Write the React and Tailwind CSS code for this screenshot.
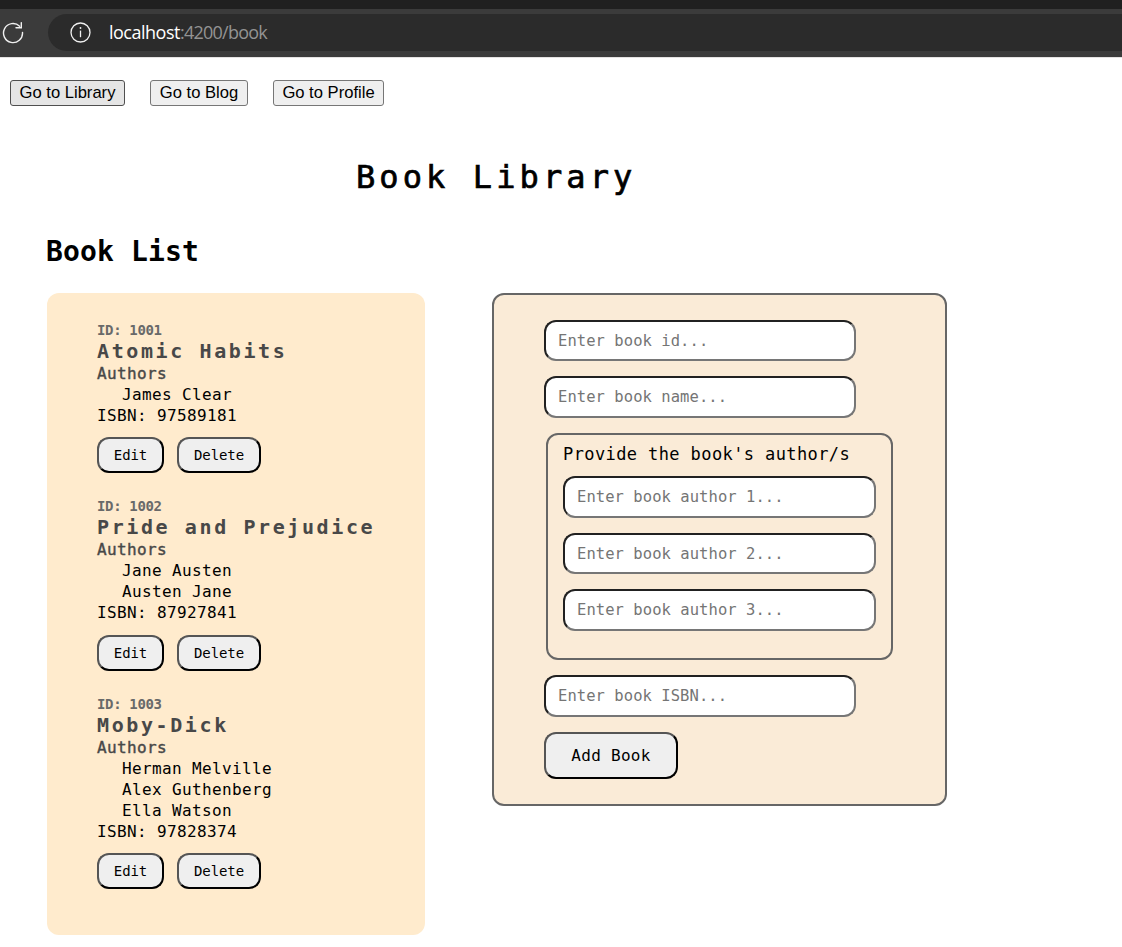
const books = [
  { id: 1001, title: "Atomic Habits", authors: ["James Clear"], isbn: "97589181", gap: "mt-[11px]" },
  { id: 1002, title: "Pride and Prejudice", authors: ["Jane Austen", "Austen Jane"], isbn: "87927841", gap: "mt-3" },
  { id: 1003, title: "Moby-Dick", authors: ["Herman Melville", "Alex Guthenberg", "Ella Watson"], isbn: "97828374", gap: "mt-[11px]" },
];

const outset =
  "rounded-xl border-2 border-t-[#555] border-l-[#555] border-r-black border-b-black bg-[#efefef] text-black whitespace-nowrap";

function BrowserBar() {
  return (
    <header className="h-[57px] bg-[#3b3b3b] border-t-[9px] border-[#202020] flex items-start pt-[5px]">
      <svg className="w-[24px] h-[24px] mt-[6px] shrink-0" viewBox="0 0 24 24" fill="none" stroke="#f0f0f0" strokeWidth="1.4">
        <path d="M19.6 6.2A9.5 9.5 0 1 0 22.5 12.4" strokeLinecap="round" />
        <path d="M21.3 2.6V7.7H16" strokeLinejoin="miter" strokeLinecap="round" />
      </svg>
      <div className="ml-[24px] flex-1 h-[37px] rounded-l-full bg-[#2b2b2b] flex items-center pl-[22px]">
        <svg className="w-[21px] h-[21px]" viewBox="0 0 21 21" fill="none" stroke="#f0f0f0" strokeWidth="1.3">
          <circle cx="10.5" cy="10.5" r="9.5" />
          <path d="M10.5 8.6v6.6" />
          <circle cx="10.5" cy="6" r="0.9" fill="#f0f0f0" stroke="none" />
        </svg>
        <p className="ml-[18px] -mt-0.5 font-['Open_Sans',sans-serif] text-[18px] leading-6 tracking-[-0.75px] text-[#939393]">
          <span className="text-white tracking-[-0.5px]">localhost</span>:4200/book
        </p>
      </div>
    </header>
  );
}

function NavButton({ children, className }) {
  return (
    <button className={"h-[26px] rounded-[3px] border font-['Liberation_Sans',sans-serif] text-[16.6px] leading-[23px] pb-px text-black whitespace-nowrap " + className}>
      {children}
    </button>
  );
}

function Book({ book }) {
  return (
    <article>
      <p className="text-[14px] leading-5 tracking-[-0.35px] font-bold text-[#696969]">ID: {book.id}</p>
      <h3 className="text-[20px] leading-[23px] tracking-[2.6px] font-bold text-[#484848] whitespace-nowrap">{book.title}</h3>
      <div className="text-[16px] leading-[21px] tracking-[0.36px] text-black">
        <p className="text-[#484848] [-webkit-text-stroke:0.4px_#484848]">Authors</p>
        <ul className="pl-[25px]">
          {book.authors.map((a) => (
            <li key={a}>{a}</li>
          ))}
        </ul>
        <p>ISBN: {book.isbn}</p>
      </div>
      <div className={"flex gap-[13px] text-[14px] tracking-[-0.1px] " + book.gap}>
        <button className={"w-[67px] h-9 " + outset}>Edit</button>
        <button className={"w-[84px] h-9 " + outset}>Delete</button>
      </div>
    </article>
  );
}

function Field({ placeholder, className }) {
  return (
    <input
      placeholder={placeholder}
      className={"block rounded-xl border-2 border-t-[#212121] border-l-[#212121] border-r-[#767676] border-b-[#767676] bg-white px-3 text-[15.5px] tracking-[0.06px] placeholder:text-[#757575] outline-none " + className}
    />
  );
}

export default function App() {
  return (
    <div className="w-[1122px] h-[947px] overflow-hidden bg-white text-black font-['DejaVu_Sans_Mono',monospace]">
      <BrowserBar />
      <nav className="flex gap-[25px] pt-[22px] pl-[10px] border-t border-[#e4e2e2]">
        <NavButton className="w-[115px] bg-[#e5e5e5] border-[#4f4f4f]">Go to Library</NavButton>
        <NavButton className="w-[98px] bg-[#efefef] border-[#767676]">Go to Blog</NavButton>
        <NavButton className="w-[111px] bg-[#efefef] border-[#767676]">Go to Profile</NavButton>
      </nav>
      <h1 className="mt-[51px] ml-[356px] text-[32px] leading-10 tracking-[4.1px] [-webkit-text-stroke:0.7px_#000]">Book Library</h1>
      <main className="flex items-start pl-[47px] pt-[34px]">
        <section className="w-[378px]">
          <h2 className="pt-0.5 text-[28px] leading-[38px] tracking-[0.15px] font-bold -ml-px">Book List</h2>
          <div className="mt-[22px] h-[642px] rounded-xl bg-[#ffebcd] pl-[50px] pt-[27px] flex flex-col gap-[23px]">
            {books.map((b) => (
              <Book key={b.id} book={b} />
            ))}
          </div>
        </section>
        <form className="ml-[67px] mt-[62px] w-[455px] h-[513px] rounded-xl border-2 border-[#666] bg-[#faebd7] pl-[50px] pt-[25px] flex flex-col items-start gap-[15px]">
          <Field placeholder="Enter book id..." className="w-[312px] h-[41px]" />
          <Field placeholder="Enter book name..." className="w-[312px] h-[42px]" />
          <div className="ml-[2px] w-[347px] h-[227px] rounded-xl border-2 border-[#666] pl-[15px] pt-[7px]">
            <p className="text-[17px] leading-6 tracking-[0.4px] whitespace-nowrap">Provide the book's author/s</p>
            <div className="mt-[10px] flex flex-col gap-[15px]">
              <Field placeholder="Enter book author 1..." className="w-[313px] h-[42px]" />
              <Field placeholder="Enter book author 2..." className="w-[313px] h-[41px]" />
              <Field placeholder="Enter book author 3..." className="w-[313px] h-[42px]" />
            </div>
          </div>
          <Field placeholder="Enter book ISBN..." className="w-[312px] h-[42px]" />
          <button type="button" className={"w-[134px] h-[47px] text-[16px] tracking-[0.3px] " + outset}>Add Book</button>
        </form>
      </main>
    </div>
  );
}
